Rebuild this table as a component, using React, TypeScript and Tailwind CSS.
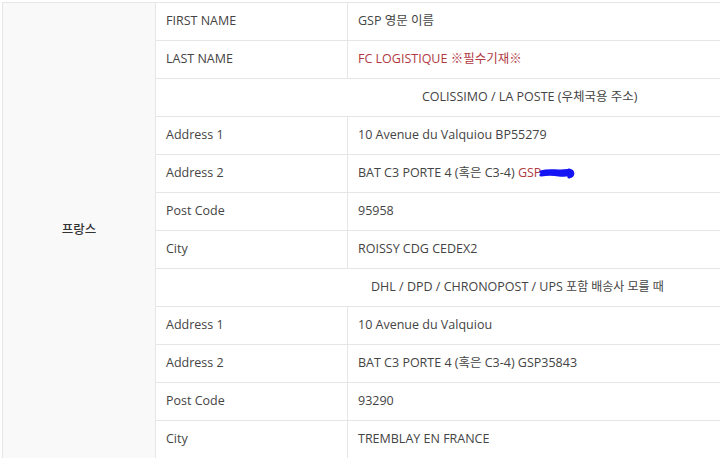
import React from "react";

const font = { fontFamily: '"Open Sans", "Noto Sans CJK KR", sans-serif' };

type Row =
  | { kind: "pair"; label: string; value: React.ReactNode }
  | { kind: "head"; text: React.ReactNode; pad: string };

const rows: Row[] = [
  { kind: "pair", label: "FIRST NAME", value: "GSP 영문 이름" },
  {
    kind: "pair",
    label: "LAST NAME",
    value: <span className="text-[#b03a3f]">FC LOGISTIQUE ※필수기재※</span>,
  },
  { kind: "head", text: "COLISSIMO / LA POSTE (우체국용 주소)", pad: "pl-[266px]" },
  { kind: "pair", label: "Address 1", value: "10 Avenue du Valquiou BP55279" },
  {
    kind: "pair",
    label: "Address 2",
    value: (
      <span className="inline-flex items-center">
        BAT C3 PORTE 4 (혹은 C3-4)&nbsp;
        <span className="text-[#b03a3f]">GSP</span>
        <svg width="36" height="12" viewBox="0 0 36 12" className="-ml-[2px]">
          <path
            d="M2 4 C8 2 14 3 20 3 C25 3 29 2 32 3 M2 7 C8 6 14 6 20 7 C25 8 29 6 33 7 M4 5 L31 5 M30 2 C35 3 35 8 30 9"
            stroke="#1414f5"
            strokeWidth="3.2"
            fill="none"
            strokeLinecap="round"
          />
        </svg>
      </span>
    ),
  },
  { kind: "pair", label: "Post Code", value: "95958" },
  { kind: "pair", label: "City", value: "ROISSY CDG CEDEX2" },
  {
    kind: "head",
    text: (
      <>
        DHL / DPD / CHRONOPOST / UPS <span className="text-[12px]">포함 배송사 모를 때</span>
      </>
    ),
    pad: "pl-[215px]",
  },
  { kind: "pair", label: "Address 1", value: "10 Avenue du Valquiou" },
  { kind: "pair", label: "Address 2", value: "BAT C3 PORTE 4 (혹은 C3-4) GSP35843" },
  { kind: "pair", label: "Post Code", value: "93290" },
  { kind: "pair", label: "City", value: "TREMBLAY EN FRANCE" },
];

export default function App() {
  return (
    <div className="w-[720px] h-[458px] overflow-hidden bg-white pl-[2px] pt-[2px]" style={font}>
      <table className="border-collapse w-[890px] table-fixed text-[12.5px] text-[#444]">
        <colgroup>
          <col className="w-[153px]" />
          <col className="w-[192px]" />
          <col />
        </colgroup>
        <tbody>
          {rows.map((r, i) => (
            <tr key={i} className="h-[38px]">
              {i === 0 && (
                <td
                  rowSpan={rows.length}
                  className="border border-[#e6e6e6] bg-[#f9f9f9] text-center align-middle font-medium text-[#333]"
                >
                  프랑스
                </td>
              )}
              {r.kind === "pair" ? (
                <>
                  <td className="border border-[#e6e6e6] pl-[10px] align-middle">{r.label}</td>
                  <td className="border border-[#e6e6e6] pl-[10px] align-middle">{r.value}</td>
                </>
              ) : (
                <td colSpan={2} className={`border border-[#e6e6e6] text-left align-middle ${r.pad}`}>
                  {r.text}
                </td>
              )}
            </tr>
          ))}
        </tbody>
      </table>
    </div>
  );
}
